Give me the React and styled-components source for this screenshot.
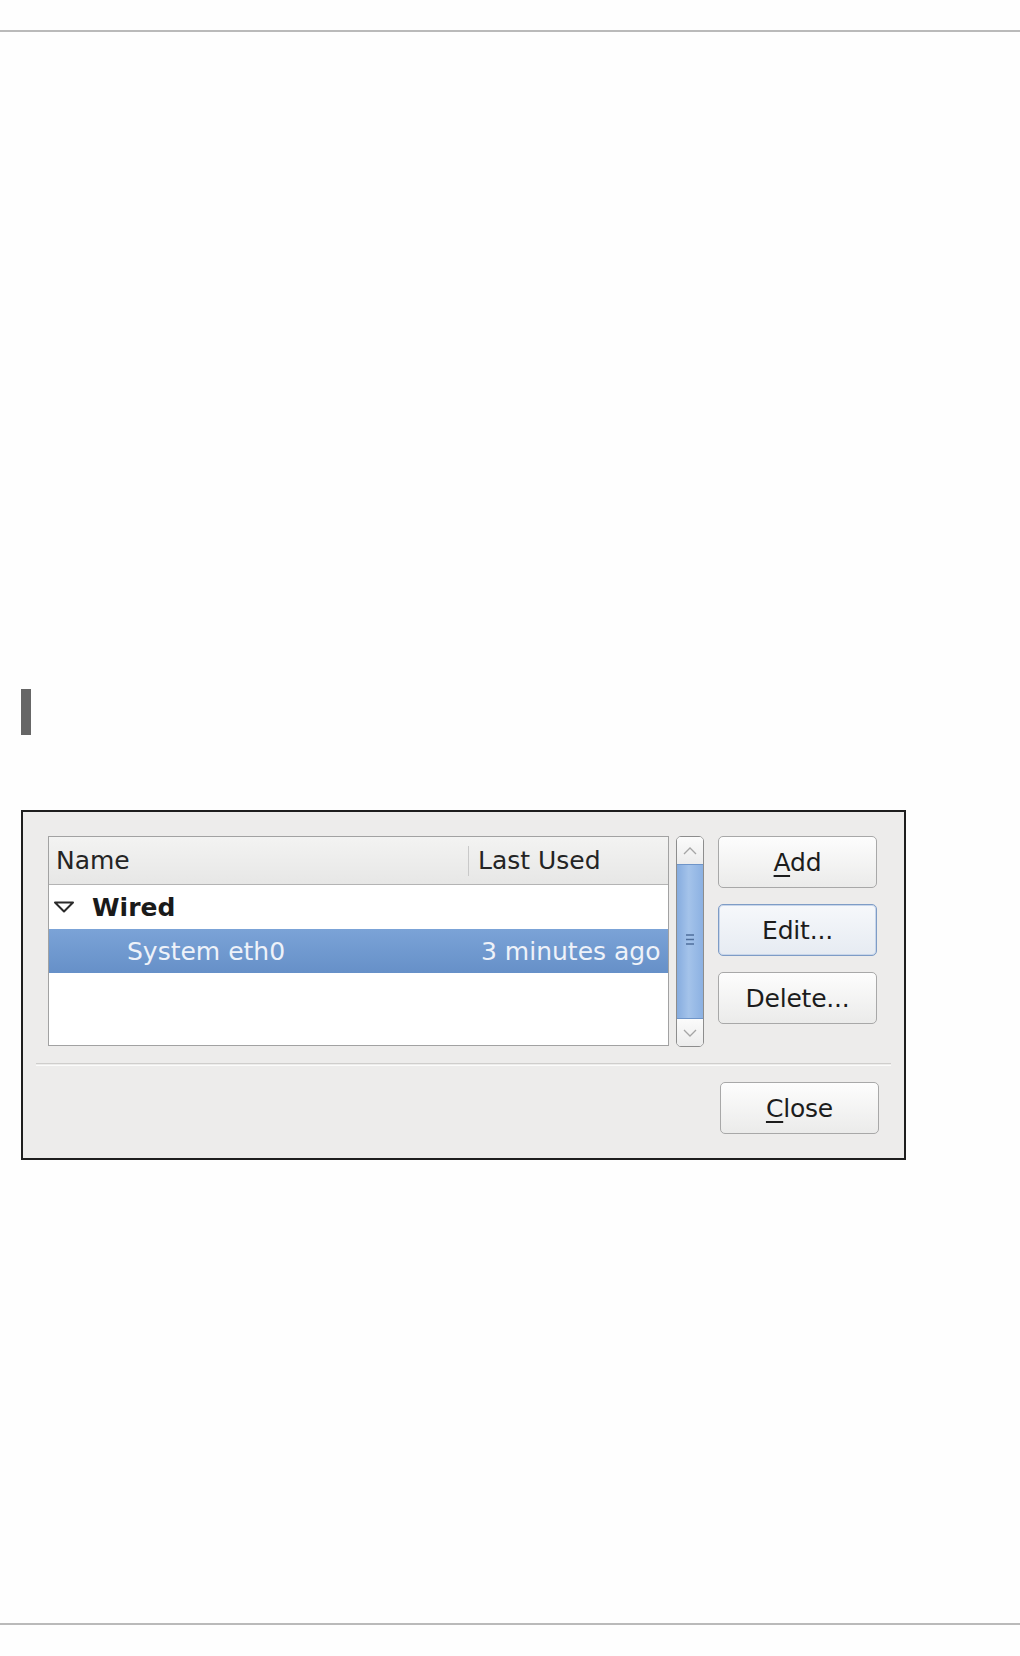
import React from 'react'
import styled, { createGlobalStyle } from 'styled-components'

const GlobalStyle = createGlobalStyle`
  html, body {
    margin: 0;
    padding: 0;
    background: #fefefe;
  }
  body {
    font-family: "DejaVu Sans", "Liberation Sans", sans-serif;
    color: #1c1c1c;
  }
`

const Page = styled.div`
  width: 1020px;
  height: 1656px;
  display: flex;
  flex-direction: column;
`

const Rule = styled.div`
  height: 2px;
  background: #bababa;
  margin-top: ${p => p.top}px;
`

const Marker = styled.div`
  width: 10px;
  height: 46px;
  background: #666;
  margin: 657px 0 0 21px;
`

const Dialog = styled.div`
  width: 881px;
  margin: 75px 0 0 21px;
  border: 2px solid #1e1e1e;
  background: #edeceb;
  font-size: 25px;
`

const Content = styled.div`
  display: flex;
  align-items: flex-start;
  padding: 24px 25px 0 25px;
`

const ListBox = styled.div`
  width: 619px;
  height: 208px;
  border: 1px solid #a2a2a2;
  background: #fff;
  display: flex;
  flex-direction: column;
`

const Row = styled.div`
  display: grid;
  grid-template-columns: 420px 1fr;
  align-items: center;
  height: ${p => p.h}px;
`

const Header = styled(Row)`
  background: linear-gradient(#f3f3f2, #e7e7e6);
  border-bottom: 1px solid #b4b4b4;
`

const HeadCell = styled.div`
  padding-left: ${p => p.pad}px;
  line-height: 30px;
  ${p => p.divider && `border-left: 1px solid #c9c9c9;`}
  ${p => p.divider && `margin-left: -1px;`}
  color: #242424;
`

const GroupRow = styled(Row)`
  grid-template-columns: 1fr;
`

const GroupCell = styled.div`
  display: flex;
  align-items: center;
  padding-left: 4px;
  font-weight: bold;
  color: #1a1a1a;
  gap: 17px;
`

const SelectedRow = styled(Row)`
  background: linear-gradient(#7ba3d7, #6690c8);
  color: #eef2f9;
`

const Cell = styled.div`
  padding-left: ${p => p.pad}px;
`

const Scrollbar = styled.div`
  width: 26px;
  height: 209px;
  margin-left: 7px;
  border: 1px solid #8d8d8d;
  border-radius: 5px;
  background: #f4f4f3;
  display: flex;
  flex-direction: column;
  overflow: hidden;
`

const Stepper = styled.div`
  height: 27px;
  display: flex;
  align-items: center;
  justify-content: center;
  background: linear-gradient(#fbfbfb, #ececec);
`

const Thumb = styled.div`
  flex: 1;
  border-top: 1px solid #6f95c9;
  border-bottom: 1px solid #6f95c9;
  background: linear-gradient(90deg, #86acdf, #a4c3ea 45%, #8cb1e2);
  display: flex;
  align-items: center;
  justify-content: center;
  padding-bottom: 4px;
`

const ButtonColumn = styled.div`
  display: flex;
  flex-direction: column;
  gap: 16px;
  margin-left: 14px;
`

const Button = styled.div`
  width: 157px;
  height: 50px;
  box-sizing: content-box;
  border: 1px solid ${p => (p.focused ? '#7e9cc6' : '#a8a8a8')};
  border-radius: 5px;
  background: ${p =>
    p.focused
      ? 'linear-gradient(#f6f8fb, #e6ebf2)'
      : 'linear-gradient(#fdfdfd, #ebebea)'};
  box-shadow: ${p => (p.focused ? 'inset 0 0 0 1px #c8d6ea' : 'none')};
  display: flex;
  align-items: center;
  justify-content: center;
  color: #1c1c1c;
  letter-spacing: -0.2px;

  u {
    text-underline-offset: 4px;
    text-decoration-thickness: 2px;
  }
`

const Separator = styled.div`
  margin: 16px 13px 0 13px;
  height: 1px;
  border-top: 1px solid #cfcecc;
  border-bottom: 1px solid #fbfbfa;
`

const Footer = styled.div`
  display: flex;
  justify-content: flex-end;
  padding: 16px 25px 24px 0;
`

const Expander = () => (
  <svg width="22" height="12" viewBox="0 0 22 12">
    <path d="M2 1.5 L20 1.5 L11 10.5 Z" fill="none" stroke="#2a2a2a" strokeWidth="2" strokeLinejoin="round" />
  </svg>
)

const Chevron = ({ up }) => (
  <svg width="14" height="8" viewBox="0 0 14 8">
    <path
      d={up ? 'M1 7 L7 1 L13 7' : 'M1 1 L7 7 L13 1'}
      fill="none"
      stroke="#a5a5a5"
      strokeWidth="1.3"
    />
  </svg>
)

const Grip = () => (
  <svg width="10" height="13" viewBox="0 0 10 13">
    <path d="M1 2 H9 M1 6.5 H9 M1 11 H9" stroke="#4f6f9c" strokeWidth="1.6" />
  </svg>
)

const App = () => (
  <Page>
    <GlobalStyle />
    <Rule top={30} />
    <Marker />
    <Dialog>
      <Content>
        <ListBox>
          <Header h={47}>
            <HeadCell pad={7}>Name</HeadCell>
            <HeadCell pad={9} divider>Last Used</HeadCell>
          </Header>
          <GroupRow h={44}>
            <GroupCell>
              <Expander />
              Wired
            </GroupCell>
          </GroupRow>
          <SelectedRow h={44}>
            <Cell pad={78}>System eth0</Cell>
            <Cell pad={12}>3 minutes ago</Cell>
          </SelectedRow>
        </ListBox>
        <Scrollbar>
          <Stepper><Chevron up /></Stepper>
          <Thumb><Grip /></Thumb>
          <Stepper><Chevron /></Stepper>
        </Scrollbar>
        <ButtonColumn>
          <Button><span><u>A</u>dd</span></Button>
          <Button focused>Edit...</Button>
          <Button>Delete...</Button>
        </ButtonColumn>
      </Content>
      <Separator />
      <Footer>
        <Button><span><u>C</u>lose</span></Button>
      </Footer>
    </Dialog>
    <Rule top={463} />
  </Page>
)

export default App
